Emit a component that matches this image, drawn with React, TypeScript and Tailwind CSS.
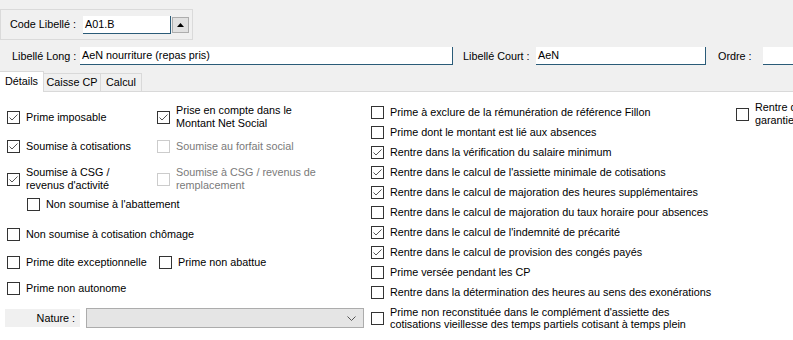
import React from 'react';

type CheckProps = {
  checked?: boolean;
  disabled?: boolean;
  lines: string[];
  leading?: string;
};

const CheckBox: React.FC<CheckProps> = ({ checked, disabled, lines, leading = 'leading-[13px]' }) => (
  <div className="flex items-center gap-[6px] whitespace-nowrap">
    <span
      className={`w-[13px] h-[13px] shrink-0 border bg-white flex items-center justify-center ${
        disabled ? 'border-[#cccccc]' : 'border-[#333333]'
      }`}
    >
      {checked && (
        <svg width="11" height="11" viewBox="0 0 11 11">
          <polyline points="1.5,5.5 4,8 9.5,2.5" fill="none" stroke="#555" strokeWidth="1" />
        </svg>
      )}
    </span>
    <span className={`${leading} ${disabled ? 'text-[#7a7a7a]' : 'text-black'}`}>
      {lines.map((l, i) => (
        <span key={i} className="block">
          {l}
        </span>
      ))}
    </span>
  </div>
);

const middleRows: { label: string; checked?: boolean }[] = [
  { label: 'Prime à exclure de la rémunération de référence Fillon' },
  { label: 'Prime dont le montant est lié aux absences' },
  { label: 'Rentre dans la vérification du salaire minimum', checked: true },
  { label: "Rentre dans le calcul de l'assiette minimale de cotisations", checked: true },
  { label: 'Rentre dans le calcul de majoration des heures supplémentaires', checked: true },
  { label: 'Rentre dans le calcul de majoration du taux horaire pour absences' },
  { label: "Rentre dans le calcul de l'indemnité de précarité", checked: true },
  { label: 'Rentre dans le calcul de provision des congés payés', checked: true },
  { label: 'Prime versée pendant les CP' },
  { label: 'Rentre dans la détermination des heures au sens des exonérations' },
];

const TextInput: React.FC<{ value?: string; className?: string }> = ({ value, className = '' }) => (
  <div
    className={`h-[18px] bg-white border-b border-r border-[#2a5b78] pl-[2px] flex items-center whitespace-nowrap overflow-hidden ${className}`}
  >
    {value}
  </div>
);

export default function App() {
  return (
    <div className="w-[793px] h-[340px] overflow-hidden bg-[#f0f0f0] text-[10.8px] text-black font-['Liberation_Sans',Arial,sans-serif] flex flex-col">
      {/* Code libellé */}
      <div className="pt-[9px]">
        <div className="w-[193px] h-[31px] border border-[#dadada] flex items-center pl-[9px]">
          <span className="w-[73px]">Code Libellé :</span>
          <TextInput value="A01.B" className="w-[88px]" />
          <div className="ml-[1px] w-[17px] h-[16px] mt-[1px] bg-[#e1e1e1] border border-[#adadad] flex items-center justify-center">
            <svg width="7" height="4" viewBox="0 0 7 4">
              <polygon points="3.5,0 7,4 0,4" fill="#000" />
            </svg>
          </div>
        </div>
      </div>

      {/* Libellés */}
      <div className="mt-[7px] flex items-center pl-[12px]">
        <span className="w-[68px]">Libellé Long :</span>
        <TextInput value="AeN nourriture (repas pris)" className="w-[373px]" />
        <span className="ml-[10px] w-[73px]">Libellé Court :</span>
        <TextInput value="AeN" className="w-[170px]" />
        <span className="ml-[12px] w-[45px]">Ordre :</span>
        <TextInput className="flex-1 border-r-0" />
      </div>

      {/* Tabs */}
      <div className="mt-[6px] flex items-end h-[21px]">
        <div className="w-[44px] h-[21px] bg-white border-t border-r border-[#d9d9d9] flex items-center justify-center pb-[1px]">
          Détails
        </div>
        <div className="w-[57px] h-[19px] bg-[#f0f0f0] border-t border-r border-b border-[#d9d9d9] flex items-center justify-center">
          Caisse CP
        </div>
        <div className="w-[41px] h-[19px] bg-[#f0f0f0] border-t border-r border-b border-[#d9d9d9] flex items-center justify-center">
          Calcul
        </div>
        <div className="flex-1 border-b border-[#d9d9d9]" />
      </div>

      {/* Content */}
      <div className="flex-1 bg-white flex">
        {/* left column */}
        <div className="w-[364px] shrink-0 pl-[7px] pt-[12px] flex flex-col">
          <div className="flex items-center h-[26px]">
            <div className="w-[150px]">
              <CheckBox checked lines={['Prime imposable']} />
            </div>
            <CheckBox checked lines={['Prise en compte dans le', 'Montant Net Social']} />
          </div>
          <div className="mt-[8px] flex items-center h-[16px]">
            <div className="w-[150px]">
              <CheckBox checked lines={['Soumise à cotisations']} />
            </div>
            <CheckBox disabled lines={['Soumise au forfait social']} />
          </div>
          <div className="mt-[12px] flex items-center h-[26px]">
            <div className="w-[150px]">
              <CheckBox checked lines={['Soumise à CSG /', "revenus d'activité"]} />
            </div>
            <CheckBox disabled lines={['Soumise à CSG / revenus de', 'remplacement']} />
          </div>
          <div className="mt-[4px] flex items-center h-[16px] pl-[20px]">
            <CheckBox lines={["Non soumise à l'abattement"]} />
          </div>
          <div className="mt-[14px] flex items-center h-[16px]">
            <CheckBox lines={['Non soumise à cotisation chômage']} />
          </div>
          <div className="mt-[12px] flex items-center h-[16px]">
            <div className="w-[152px]">
              <CheckBox lines={['Prime dite exceptionnelle']} />
            </div>
            <CheckBox lines={['Prime non abattue']} />
          </div>
          <div className="mt-[10px] flex items-center h-[16px]">
            <CheckBox lines={['Prime non autonome']} />
          </div>
          <div className="mt-[12px] flex items-center h-[20px] -ml-[2px]">
            <div className="w-[75px] h-[18px] bg-[#f0f0f0] flex items-center justify-end pr-[5px]">Nature :</div>
            <div className="ml-[6px] w-[278px] h-[20px] bg-[#e5e5e5] border border-[#acacac] flex items-center justify-end pr-[7px]">
              <svg width="9" height="5" viewBox="0 0 9 5">
                <polyline points="0.5,0.5 4.5,4.5 8.5,0.5" fill="none" stroke="#555" strokeWidth="1" />
              </svg>
            </div>
          </div>
        </div>

        {/* middle column */}
        <div className="w-[365px] shrink-0 pl-[7px] pt-[10px] flex flex-col">
          {middleRows.map((r) => (
            <div key={r.label} className="h-[20px] flex items-center">
              <CheckBox checked={r.checked} lines={[r.label]} />
            </div>
          ))}
          <div className="mt-[4px] h-[24px] flex items-center">
            <CheckBox
              leading="leading-[12px]"
              lines={[
                "Prime non reconstituée dans le complément d'assiette des",
                'cotisations vieillesse des temps partiels cotisant à temps plein',
              ]}
            />
          </div>
        </div>

        {/* right column: cut off by the window edge, as in the screen */}
        <div className="flex-1 pl-[7px] pt-[9px] overflow-hidden">
          <div className="h-[26px] flex items-center">
            <CheckBox lines={['Rentre dans le calcul de la', "garantie individuelle du pouvoir d'achat"]} />
          </div>
        </div>
      </div>
    </div>
  );
}
